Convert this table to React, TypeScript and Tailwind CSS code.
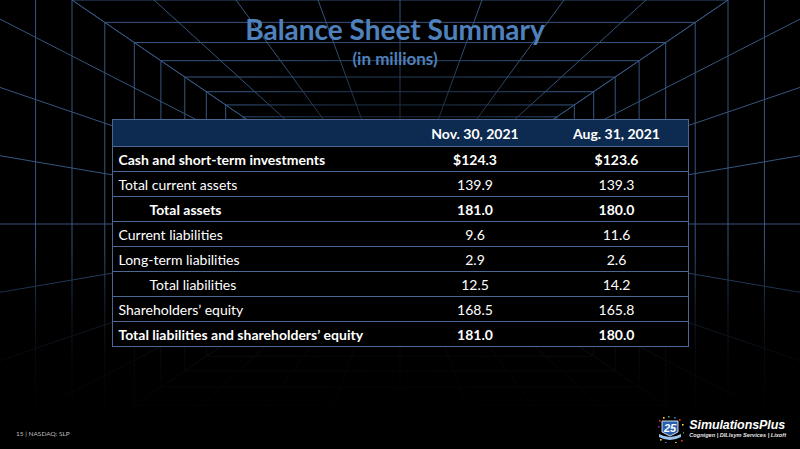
import React from 'react'

const VX = 400
const VY = 224
const RATIO = 1.464

const frames = Array.from({ length: 26 }, (_, i) => 328 * Math.pow(0.9, i - 3))

const edgePoints: [number, number][] = []
for (let i = 0; i <= 8; i++) {
  edgePoints.push([72 + i * 82, 0])
  edgePoints.push([72 + i * 82, 448])
  edgePoints.push([72, i * 56])
  edgePoints.push([728, i * 56])
}

function GridBackground() {
  return (
    <svg className="absolute inset-0" width="800" height="449" viewBox="0 0 800 449">
      <defs>
        <linearGradient id="fadeY" x1="0" y1="0" x2="0" y2="1">
          <stop offset="0" stopColor="#fff" stopOpacity="1" />
          <stop offset="0.55" stopColor="#fff" stopOpacity="1" />
          <stop offset="0.68" stopColor="#fff" stopOpacity="0.4" />
          <stop offset="0.8" stopColor="#fff" stopOpacity="0.1" />
          <stop offset="0.95" stopColor="#fff" stopOpacity="0" />
        </linearGradient>
        <radialGradient id="fadeC" cx="400" cy="224" r="260" gradientUnits="userSpaceOnUse">
          <stop offset="0" stopColor="#fff" stopOpacity="0.15" />
          <stop offset="0.5" stopColor="#fff" stopOpacity="0.6" />
          <stop offset="0.8" stopColor="#fff" stopOpacity="1" />
        </radialGradient>
        <mask id="maskY">
          <rect width="800" height="449" fill="url(#fadeY)" />
        </mask>
        <mask id="maskC">
          <rect width="800" height="449" fill="url(#fadeC)" />
        </mask>
      </defs>
      <g mask="url(#maskY)">
        <g mask="url(#maskC)" stroke="#36557f" strokeWidth="1" fill="none">
          {frames.map((w, i) => {
            const h = w / RATIO
            return <rect key={i} x={VX - w} y={VY - h} width={w * 2} height={h * 2} />
          })}
          {edgePoints.map(([x, y], i) => (
            <line key={i} x1={VX} y1={VY} x2={VX + (x - VX) * 3} y2={VY + (y - VY) * 3} />
          ))}
        </g>
      </g>
    </svg>
  )
}

const rows = [
  { label: 'Cash and short-term investments', a: '$124.3', b: '$123.6', bold: true },
  { label: 'Total current assets', a: '139.9', b: '139.3' },
  { label: 'Total assets', a: '181.0', b: '180.0', bold: true, indent: true },
  { label: 'Current liabilities', a: '9.6', b: '11.6' },
  { label: 'Long-term liabilities', a: '2.9', b: '2.6' },
  { label: 'Total liabilities', a: '12.5', b: '14.2', indent: true },
  { label: 'Shareholders’ equity', a: '168.5', b: '165.8' },
  { label: 'Total liabilities and shareholders’ equity', a: '181.0', b: '180.0', bold: true },
]

function Logo() {
  const dots = [
    ['#e53935', 3, 5], ['#fdd835', 7, 2], ['#43a047', 12, 1], ['#1e88e5', 18, 2], ['#e53935', 23, 4],
    ['#fdd835', 26, 9], ['#8e24aa', 2, 11], ['#43a047', 27, 17], ['#fdd835', 4, 24], ['#e53935', 25, 25],
    ['#1e88e5', 9, 27], ['#fdd835', 19, 27],
  ] as const
  return (
    <div className="flex items-center gap-[5px]">
      <svg width="28" height="28" viewBox="0 0 28 28">
        {dots.map(([c, x, y], i) => (
          <rect key={i} x={x} y={y} width="1.6" height="1.6" fill={c} />
        ))}
        <path d="M6 6 L22 6 L22 17 L14 21 L6 17 Z" fill="#2a5fae" stroke="#fff" strokeWidth="0.8" />
        <text x="14" y="17" textAnchor="middle" fontSize="11" fontWeight="900" fill="#fff" fontFamily="Liberation Sans, sans-serif" fontStyle="italic">
          25
        </text>
        <path d="M3 19 Q14 25 25 19 L25 22 Q14 28 3 22 Z" fill="#9cc3ee" />
      </svg>
      <div className="flex flex-col leading-none text-white italic font-bold font-['Liberation_Sans',sans-serif]">
        <span className="text-[12.5px] tracking-[-0.1px]">SimulationsPlus</span>
        <span className="text-[5.6px] mt-[2px] text-[#e6e6e6]">Cognigen | DILIsym Services | Lixoft</span>
      </div>
    </div>
  )
}

export default function App() {
  return (
    <div className="relative w-[800px] h-[449px] bg-black overflow-hidden font-['Lato',sans-serif]">
      <GridBackground />
      <div className="relative flex flex-col h-full">
        <div className="flex flex-col items-center pt-[12px] pr-[10px]">
          <h1 className="text-[28px] leading-[34px] font-bold text-[#4f81bd]">Balance Sheet Summary</h1>
          <p className="text-[17px] leading-[22px] font-bold text-[#4f81bd] mt-[2px]">(in millions)</p>
        </div>
        <div className="flex justify-center mt-[49px]">
          <div className="w-[577px] border border-[#4a6892] bg-black text-white text-[14px]">
            <div className="grid grid-cols-[292px_141px_142px] h-[26px] items-center bg-[#0d2a50] font-bold">
              <span />
              <span className="text-center">Nov. 30, 2021</span>
              <span className="text-center">Aug. 31, 2021</span>
            </div>
            {rows.map(r => (
              <div
                key={r.label}
                className={`grid grid-cols-[292px_141px_142px] h-[25px] items-center border-t border-[#4a6892] ${r.bold ? 'font-bold' : ''}`}
              >
                <span className={r.indent ? 'pl-[37px]' : 'pl-[6px]'}>{r.label}</span>
                <span className="text-center">{r.a}</span>
                <span className="text-center">{r.b}</span>
              </div>
            ))}
          </div>
        </div>
        <div className="mt-auto flex items-end justify-between pl-[16px] pr-[14px] pb-[6px]">
          <span className="text-[6.5px] text-[#bfbfbf] mb-[4px]">15 | NASDAQ: SLP</span>
          <Logo />
        </div>
      </div>
    </div>
  )
}
